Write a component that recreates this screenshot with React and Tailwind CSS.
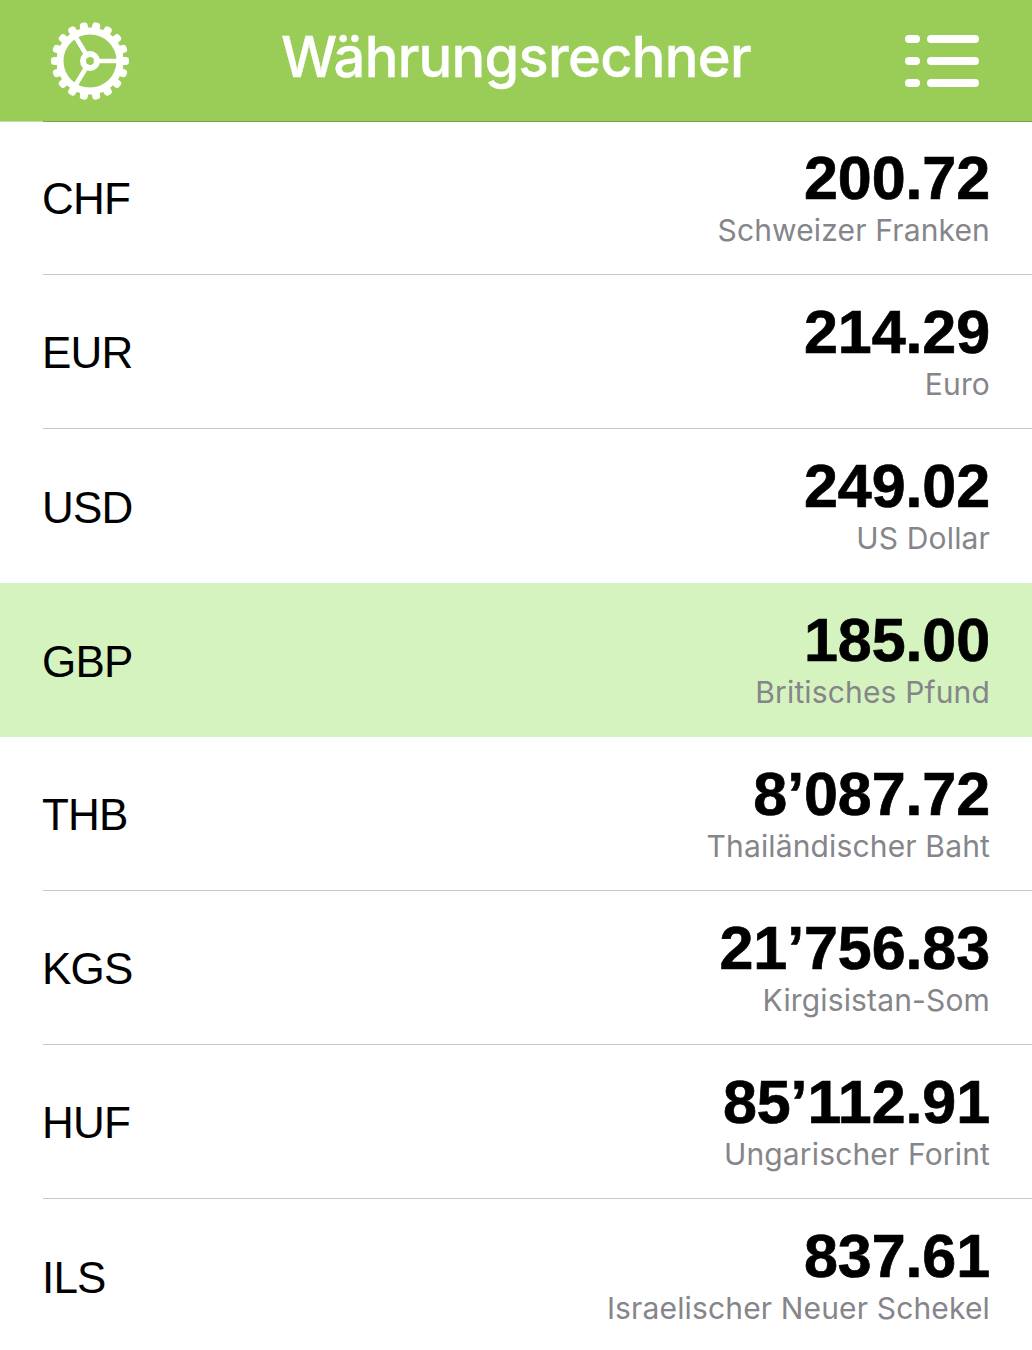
const rows = [
  { code: "CHF", value: "200.72", name: "Schweizer Franken" },
  { code: "EUR", value: "214.29", name: "Euro" },
  { code: "USD", value: "249.02", name: "US Dollar" },
  { code: "GBP", value: "185.00", name: "Britisches Pfund", active: true },
  { code: "THB", value: "8’087.72", name: "Thailändischer Baht" },
  { code: "KGS", value: "21’756.83", name: "Kirgisistan-Som" },
  { code: "HUF", value: "85’112.91", name: "Ungarischer Forint" },
  { code: "ILS", value: "837.61", name: "Israelischer Neuer Schekel" },
];

const teeth = Array.from({ length: 18 }, (_, i) => 10 + i * 20);

function GearIcon() {
  return (
    <svg width="80" height="80" viewBox="0 0 80 80" className="text-white">
      {teeth.map((deg) => (
        <rect key={deg} x="36" y="1" width="8" height="11" rx="3.2" fill="currentColor" transform={`rotate(${deg} 40 40)`} />
      ))}
      <circle cx="40" cy="40" r="30" fill="none" stroke="currentColor" strokeWidth="7" />
      <g stroke="currentColor" strokeWidth="4.6" strokeLinecap="round">
        <line x1="46" y1="40" x2="68" y2="40" />
        <line x1="37" y1="34.8" x2="25" y2="15" />
        <line x1="37" y1="45.2" x2="25" y2="65" />
      </g>
      <circle cx="40" cy="40" r="7" fill="none" stroke="currentColor" strokeWidth="6" />
    </svg>
  );
}

function ListIcon() {
  return (
    <svg width="74" height="52" viewBox="0 0 74 52" fill="white">
      <rect x="0" y="0" width="15" height="8" rx="4" />
      <rect x="22" y="0" width="52" height="8" rx="4" />
      <rect x="0" y="22" width="15" height="8" rx="4" />
      <rect x="22" y="22" width="52" height="8" rx="4" />
      <rect x="0" y="44" width="15" height="8" rx="4" />
      <rect x="22" y="44" width="52" height="8" rx="4" />
    </svg>
  );
}

export default function App() {
  return (
    <div className="w-[1032px] h-[1350px] overflow-hidden bg-white font-['Inter',sans-serif]">
      {/* Header */}
      <div className="h-[121px] bg-[#9acd57] flex items-center justify-between pl-[50px] pr-[53px]">
        <GearIcon />
        <h1 className="text-[56px] font-medium tracking-[-0.7px] text-white leading-none pb-[8px] pr-[3px] [-webkit-text-stroke:0.4px_white]">Währungsrechner</h1>
        <ListIcon />
      </div>
      <div className="h-px bg-[#c3dea6]">
        <div className="ml-[43px] h-px bg-[#7f9f5a]" />
      </div>

      {/* Currency rows */}
      <div className="-mt-px">
        {rows.map((row, i) => (
          <div key={row.code} className={`h-[154px] pl-[43px] ${row.active ? "bg-[#d5f3bf]" : ""}`}>
            <div className={`h-full flex items-center justify-between pr-[42px] ${
              row.active || rows[i + 1]?.active || i === rows.length - 1 ? "" : "border-b border-[#c8c8c8]"
            }`}>
              <span className="-ml-px text-[44px] tracking-[-0.8px] text-black leading-none pt-[3px] font-['Liberation_Sans',sans-serif]">{row.code}</span>
              <div className="flex flex-col items-end">
                <span className="text-[61px] font-bold tracking-[-0.1px] text-black leading-[62px] pt-[1px] [-webkit-text-stroke:0.7px_black] font-['Liberation_Sans',sans-serif]">{row.value}</span>
                <span className="text-[30px] text-[#85858a] tracking-[0.15px] leading-[40px] pt-[1px]">{row.name}</span>
              </div>
            </div>
          </div>
        ))}
      </div>
    </div>
  );
}
